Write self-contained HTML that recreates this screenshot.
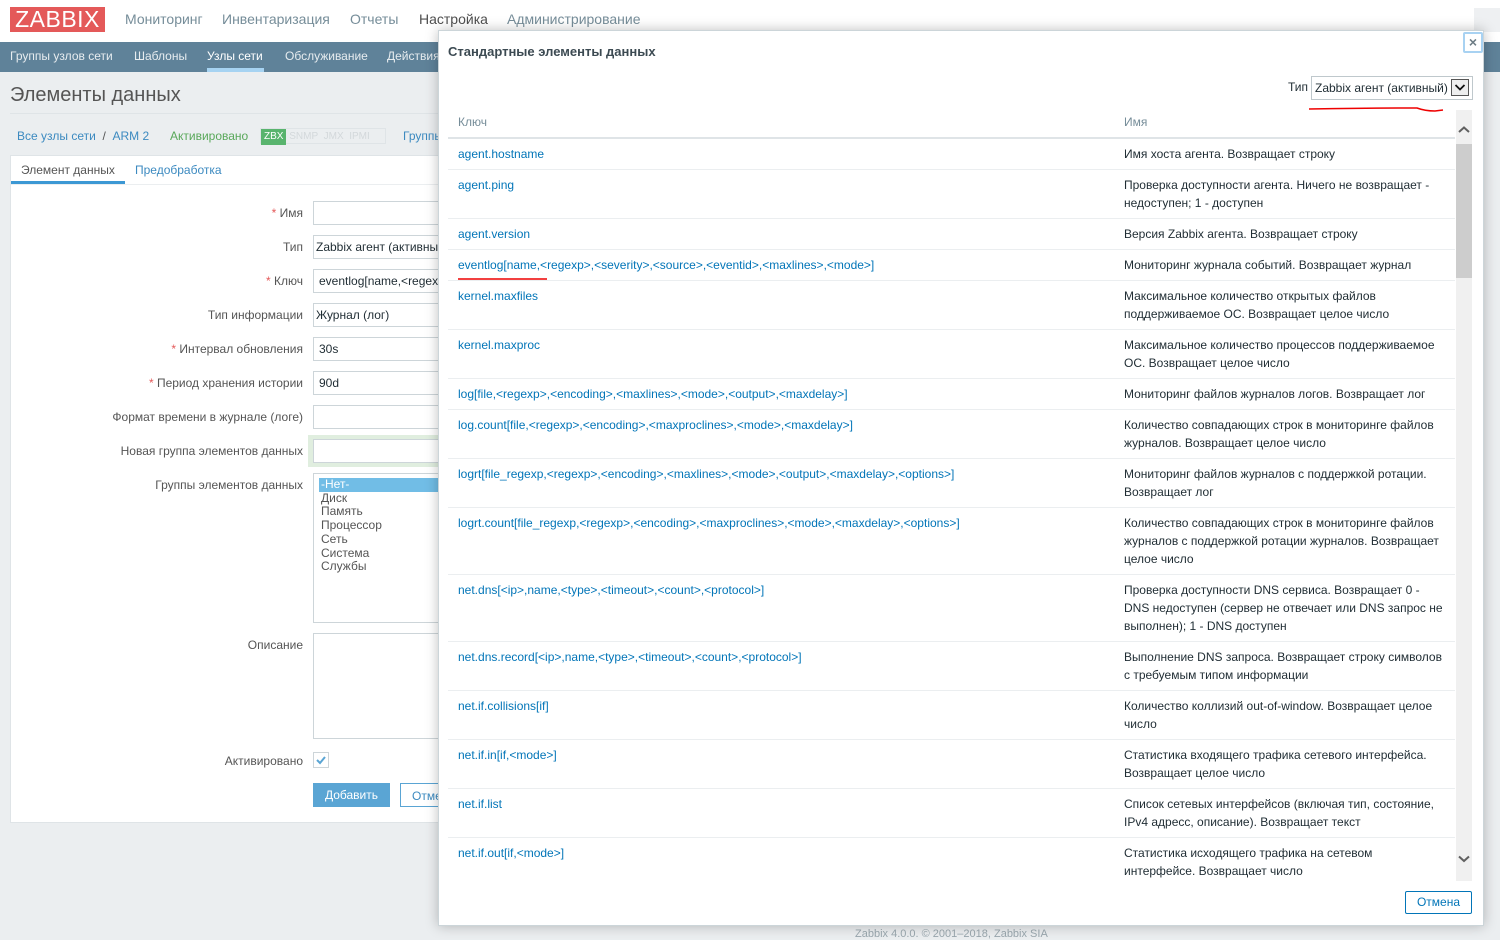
<!DOCTYPE html>
<html><head><meta charset="utf-8"><style>
*{box-sizing:border-box;margin:0;padding:0}
body{width:1500px;height:936px;overflow:hidden;background:#ebeef0;font-family:"Liberation Sans",Arial,sans-serif;font-size:12px;color:#1f2c33;position:relative}
.a{position:absolute}
.top{left:0;top:0;width:1500px;height:42px;background:#fff}
.logo{left:10px;top:7px;width:95px;height:25px;background:#e45959;color:#fff;font-size:23px;line-height:25px;text-align:center;letter-spacing:0.5px}
.mm{top:11px;font-size:14px;color:#768d99}
.nav{left:0;top:42px;width:1500px;height:30px;background:#5f8299}
.nav span{position:absolute;top:7px;color:#fff;font-size:12px;opacity:.85}
.lbl{right:1197px;color:#555;font-size:12px;text-align:right;white-space:nowrap}
.lbl b{color:#e45959;font-weight:normal}
.inp{left:313px;width:140px;height:24px;border:1px solid #cdd5d9;background:#fff;padding:4px 5px;color:#1f2c33;white-space:nowrap;overflow:hidden}
.modal{left:438px;top:30px;width:1046px;height:896px;background:#fff;border:1px solid #ccd5d9;box-shadow:0 0 12px rgba(0,0,0,.25)}
table{border-collapse:collapse;width:1007px;table-layout:fixed}
th{text-align:left;font-weight:normal;color:#768d99;padding:6px 10px 8px;height:29px;border-bottom:2px solid #dfe4e7}
td{vertical-align:top;padding:6px 10px;line-height:18px;border-bottom:1px solid #ebeef0;color:#1f2c33}
td a{color:#0275b8;text-decoration:none}
</style></head><body>
<div class="a top"></div>
<div class="a logo">ZABBIX</div>
<div class="a mm" style="left:125px">Мониторинг</div>
<div class="a mm" style="left:222px">Инвентаризация</div>
<div class="a mm" style="left:350px">Отчеты</div>
<div class="a mm" style="left:419px;color:#4f4f4f">Настройка</div>
<div class="a mm" style="left:507px">Администрирование</div>
<div class="a" style="left:1474px;top:8px;width:26px;height:24px;background:#eef0f2"></div>
<div class="a nav"><span style="left:10px">Группы узлов сети</span><span style="left:134px">Шаблоны</span><span style="left:207px;opacity:1">Узлы сети</span><span style="left:285px">Обслуживание</span><span style="left:387px">Действия</span></div>
<div class="a" style="left:207px;top:68px;width:57px;height:4px;background:#a6d3f2"></div>
<div class="a" style="left:10px;top:84px;font-size:20px;color:#555">Элементы данных</div>
<div class="a" style="left:10px;top:113px;width:480px;height:1px;background:#dfe4e7"></div>
<div class="a" style="left:17px;top:129px;color:#3c8ac0">Все узлы сети <span style="color:#555">&nbsp;/&nbsp;</span> ARM 2</div>
<div class="a" style="left:170px;top:129px;color:#59a85a">Активировано</div>
<div class="a" style="left:260px;top:128px;width:126px;height:16px;border:1px solid #dfe4e7;font-size:10px;line-height:14px;color:#d3d8db"><span style="background:#59b46e;color:#fff;padding:1px 3px;display:inline-block">ZBX</span> SNMP&nbsp; JMX&nbsp; IPMI</div>
<div class="a" style="left:403px;top:129px;color:#3c8ac0">Группы</div>
<div class="a" style="left:10px;top:155px;width:480px;height:668px;background:#fff;border:1px solid #dfe4e7"></div>
<div class="a" style="left:21px;top:163px;color:#555">Элемент данных</div>
<div class="a" style="left:11px;top:181px;width:114px;height:3px;background:#3c98d4"></div>
<div class="a" style="left:135px;top:163px;color:#3c8ac0">Предобработка</div>
<div class="a" style="left:11px;top:184px;width:478px;height:1px;background:#ebeef0"></div>
<div class="a lbl" style="top:206px"><b>*</b> Имя</div><div class="a inp" style="top:201px"></div>
<div class="a lbl" style="top:240px">Тип</div><div class="a inp" style="top:235px;padding-left:2px">Zabbix агент (активный)</div>
<div class="a lbl" style="top:274px"><b>*</b> Ключ</div><div class="a inp" style="top:269px">eventlog[name,&lt;regexp&gt;</div>
<div class="a lbl" style="top:308px">Тип информации</div><div class="a inp" style="top:303px;padding-left:2px">Журнал (лог)</div>
<div class="a lbl" style="top:342px"><b>*</b> Интервал обновления</div><div class="a inp" style="top:337px">30s</div>
<div class="a lbl" style="top:376px"><b>*</b> Период хранения истории</div><div class="a inp" style="top:371px">90d</div>
<div class="a lbl" style="top:410px">Формат времени в журнале (логе)</div><div class="a inp" style="top:405px"></div>
<div class="a lbl" style="top:444px">Новая группа элементов данных</div><div class="a" style="left:308px;top:435px;width:140px;height:32px;background:#e0eedf"></div><div class="a inp" style="top:439px"></div>
<div class="a lbl" style="top:478px">Группы элементов данных</div>
<div class="a inp" style="top:473px;height:150px;padding:4px 5px 4px 7px;line-height:13.7px;color:#555">
<div style="background:#71bde6;color:#fff;margin:0 -5px 0 -2px;padding-left:2px">-Нет-</div>Диск<br>Память<br>Процессор<br>Сеть<br>Система<br>Службы</div>
<div class="a lbl" style="top:638px">Описание</div><div class="a inp" style="top:633px;height:106px"></div>
<div class="a lbl" style="top:754px">Активировано</div>
<div class="a" style="left:313px;top:752px;width:16px;height:16px;border:1px solid #cdd5d9;background:#fff"><svg width="14" height="14" style="display:block"><path d="M3 7 L6 10 L11 4" stroke="#5aa5d4" stroke-width="2" fill="none"/></svg></div>
<div class="a" style="left:313px;top:783px;width:77px;height:24px;background:#5aa5d4;color:#fff;text-align:center;line-height:24px">Добавить</div>
<div class="a" style="left:400px;top:783px;width:60px;height:24px;border:1px solid #5aa5d4;color:#3c8ac0;padding:5px 11px">Отмена</div>
<div class="a" style="left:855px;top:928px;color:#9aa7ae;font-size:11px">Zabbix 4.0.0. © 2001–2018, Zabbix SIA</div>

<div class="a modal">
<div class="a" style="left:9px;top:13px;font-weight:bold;font-size:13px;color:#3c4a52">Стандартные элементы данных</div>
<div class="a" style="left:1024px;top:1px;width:20px;height:21px;border:2px solid #a8d2f2;border-radius:2px;color:#6c7b84;text-align:center;line-height:16px;font-size:14px;font-weight:bold">×</div>
<div class="a" style="left:849px;top:49px;color:#1f2c33">Тип</div>
<div class="a" style="left:872px;top:45px;width:162px;height:24px;border:1px solid #bfc8cc;padding:4px 3px;color:#1f2c33;white-space:nowrap">Zabbix агент (активный)<span style="position:absolute;right:3px;top:2px;width:18px;height:17px;border:1px solid #555;background:#eee"><svg width="16" height="15" style="display:block"><path d="M3.5 5 L8 9.5 L12.5 5" stroke="#111" stroke-width="1.8" fill="none"/></svg></span></div>
<svg class="a" style="left:868px;top:72px" width="140" height="12"><path d="M2 6 Q60 5 110 5 Q118 8 128 8 L136 7" stroke="#e00" stroke-width="1.5" fill="none"/></svg>
<div class="a" style="left:9px;top:78px;width:1008px;height:772px;overflow:hidden">
<table>
<colgroup><col style="width:666px"><col></colgroup>
<tr><th>Ключ</th><th>Имя</th></tr>
<tr><td><a>agent.hostname</a></td><td>Имя хоста агента. Возвращает строку</td></tr>
<tr><td><a>agent.ping</a></td><td>Проверка доступности агента. Ничего не возвращает - недоступен; 1 - доступен</td></tr>
<tr><td><a>agent.version</a></td><td>Версия Zabbix агента. Возвращает строку</td></tr>
<tr><td><a>eventlog[name,&lt;regexp&gt;,&lt;severity&gt;,&lt;source&gt;,&lt;eventid&gt;,&lt;maxlines&gt;,&lt;mode&gt;]</a></td><td>Мониторинг журнала событий. Возвращает журнал</td></tr>
<tr><td><a>kernel.maxfiles</a></td><td>Максимальное количество открытых файлов поддерживаемое ОС. Возвращает целое число</td></tr>
<tr><td><a>kernel.maxproc</a></td><td>Максимальное количество процессов поддерживаемое ОС. Возвращает целое число</td></tr>
<tr><td><a>log[file,&lt;regexp&gt;,&lt;encoding&gt;,&lt;maxlines&gt;,&lt;mode&gt;,&lt;output&gt;,&lt;maxdelay&gt;]</a></td><td>Мониторинг файлов журналов логов. Возвращает лог</td></tr>
<tr><td><a>log.count[file,&lt;regexp&gt;,&lt;encoding&gt;,&lt;maxproclines&gt;,&lt;mode&gt;,&lt;maxdelay&gt;]</a></td><td>Количество совпадающих строк в мониторинге файлов журналов. Возвращает целое число</td></tr>
<tr><td><a>logrt[file_regexp,&lt;regexp&gt;,&lt;encoding&gt;,&lt;maxlines&gt;,&lt;mode&gt;,&lt;output&gt;,&lt;maxdelay&gt;,&lt;options&gt;]</a></td><td>Мониторинг файлов журналов с поддержкой ротации. Возвращает лог</td></tr>
<tr><td><a>logrt.count[file_regexp,&lt;regexp&gt;,&lt;encoding&gt;,&lt;maxproclines&gt;,&lt;mode&gt;,&lt;maxdelay&gt;,&lt;options&gt;]</a></td><td>Количество совпадающих строк в мониторинге файлов журналов с поддержкой ротации журналов. Возвращает целое число</td></tr>
<tr><td><a>net.dns[&lt;ip&gt;,name,&lt;type&gt;,&lt;timeout&gt;,&lt;count&gt;,&lt;protocol&gt;]</a></td><td>Проверка доступности DNS сервиса. Возвращает 0 - DNS недоступен (сервер не отвечает или DNS запрос не выполнен); 1 - DNS доступен</td></tr>
<tr><td><a>net.dns.record[&lt;ip&gt;,name,&lt;type&gt;,&lt;timeout&gt;,&lt;count&gt;,&lt;protocol&gt;]</a></td><td>Выполнение DNS запроса. Возвращает строку символов с требуемым типом информации</td></tr>
<tr><td><a>net.if.collisions[if]</a></td><td>Количество коллизий out-of-window. Возвращает целое число</td></tr>
<tr><td><a>net.if.in[if,&lt;mode&gt;]</a></td><td>Статистика входящего трафика сетевого интерфейса. Возвращает целое число</td></tr>
<tr><td><a>net.if.list</a></td><td>Список сетевых интерфейсов (включая тип, состояние, IPv4 адресс, описание). Возвращает текст</td></tr>
<tr><td><a>net.if.out[if,&lt;mode&gt;]</a></td><td>Статистика исходящего трафика на сетевом интерфейсе. Возвращает число</td></tr>
<tr><td><a>net.if.total[if,&lt;mode&gt;]</a></td><td>Статистика трафика</td></tr>
</table>
</div>
<svg class="a" style="left:18px;top:245px" width="92" height="6"><path d="M1 3 L90 3" stroke="#e00" stroke-width="1.5"/></svg>
<div class="a" style="left:1017px;top:79px;width:16px;height:771px;background:#f0f0f0"></div>
<div class="a" style="left:1017px;top:113px;width:16px;height:134px;background:#cdcdcd"></div>
<svg class="a" style="left:1017px;top:93px" width="16" height="12"><path d="M3 8 L8 3.5 L13 8" stroke="#606060" stroke-width="2" fill="none"/></svg>
<svg class="a" style="left:1017px;top:822px" width="16" height="12"><path d="M3 3.5 L8 8 L13 3.5" stroke="#606060" stroke-width="2" fill="none"/></svg>
<div class="a" style="left:966px;top:860px;width:67px;height:23px;border:1px solid #0275b8;color:#0275b8;text-align:center;line-height:21px;border-radius:2px">Отмена</div>
</div>
</body></html>
